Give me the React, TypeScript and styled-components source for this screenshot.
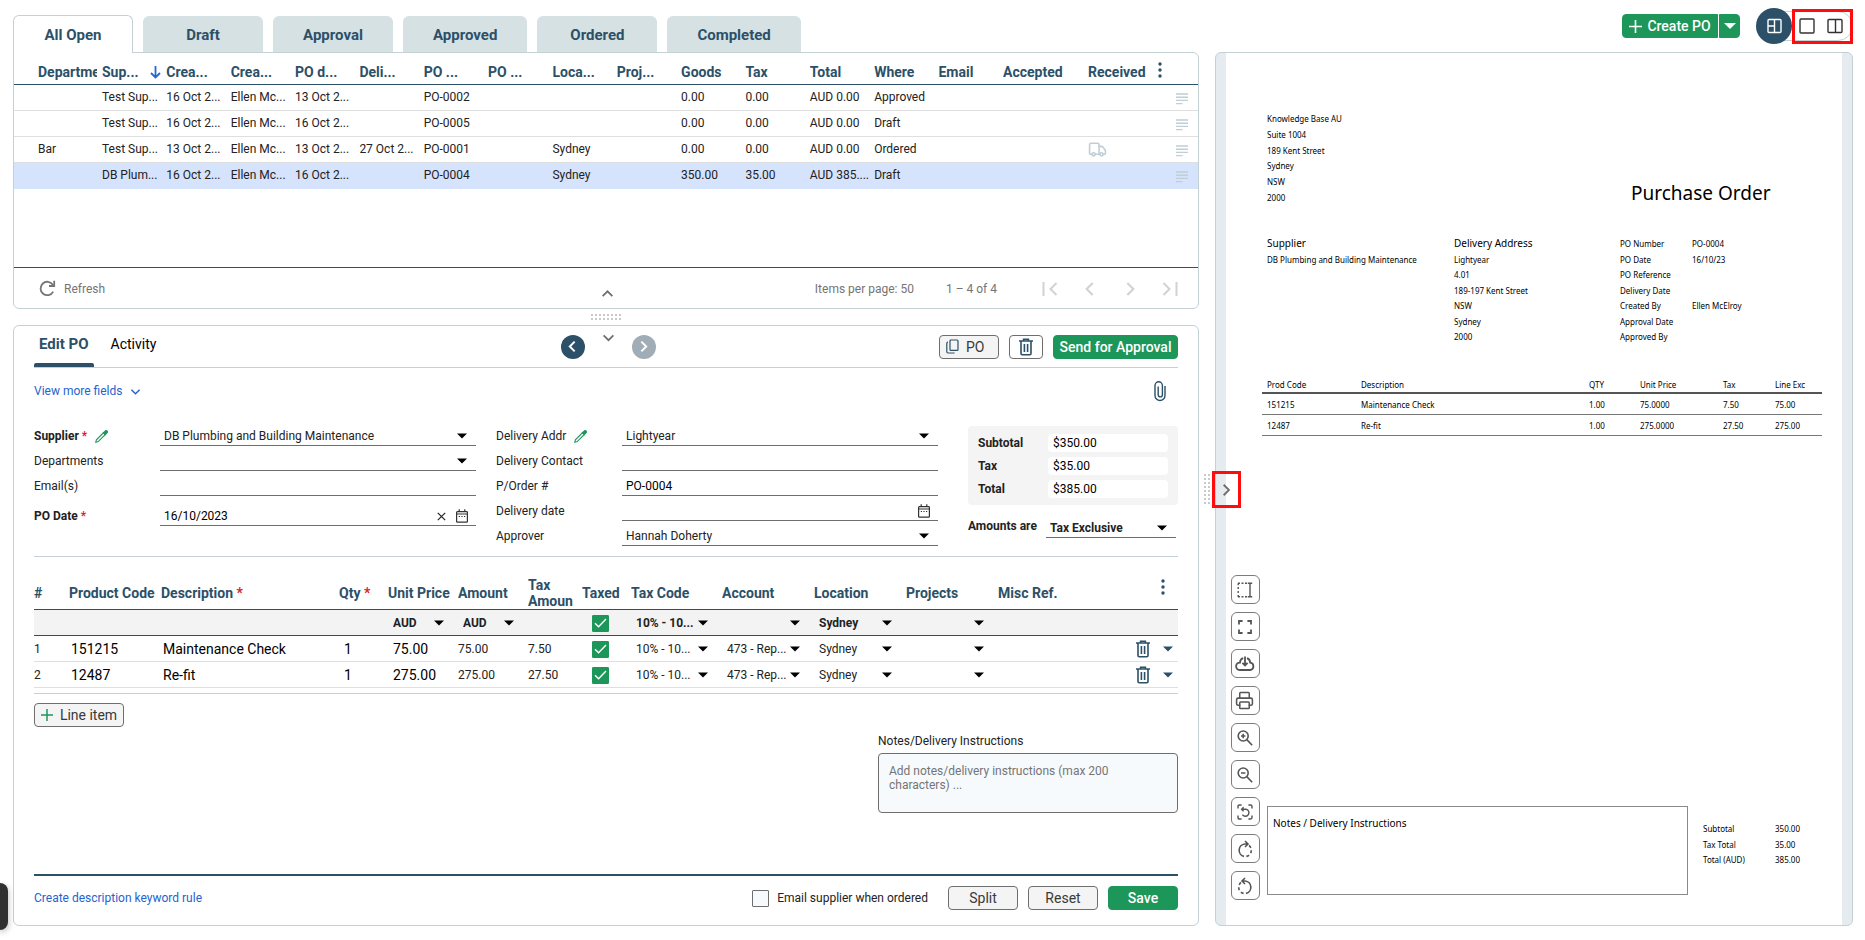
import React, { useState } from 'react';
import styled, { createGlobalStyle, css } from 'styled-components';
import { Printer, Truck } from 'lucide-react';

const navy = '#2c5068';
const green = '#1d965a';
const line = '#c3d1d7';
const grey = '#6e6e6e';
const sans = 'Roboto, "Liberation Sans", sans-serif';

const Global = createGlobalStyle`
  *, *::before, *::after { box-sizing: border-box; }
  body { margin: 0; background: #fff; color: #222; font: 12px/16px ${sans}; }
  button, input, select, textarea { font: inherit; color: inherit; margin: 0; padding: 0; border: 0; border-radius: 0; background: none; }
  button { cursor: pointer; }
  input, select, textarea { min-width: 0; outline-color: ${navy}; }
  svg { display: block; flex: none; }
  a { color: #2563cf; text-decoration: none; }
`;

/* ---------- page frame ---------- */

const Page = styled.div`
  min-height: 100vh;
  padding: 0 12px 14px 13px;
  display: grid;
  grid-template-columns: minmax(0, 1186fr) 16px minmax(0, 638fr);
  grid-template-rows: 52px 1fr;
`;

const TopLeft = styled.nav`
  grid-column: 1 / 3;
  display: flex;
  align-items: flex-end;
  gap: 10px;
`;

const TopRight = styled.div`
  display: flex;
  align-items: center;
  justify-content: flex-end;
  gap: 16px;
`;

const StatusTab = styled.button<{ $active?: boolean }>`
  min-width: 120px;
  height: 36px;
  padding: 2px 30px 0;
  border-radius: 6px 6px 0 0;
  background: #d6e1e3;
  color: ${navy};
  font-size: 15px;
  font-weight: 700;
  ${p => p.$active && css`
    position: relative;
    height: 38px;
    margin-bottom: -1px;
    padding: 0 20px;
    background: #fff;
    border: 1px solid ${line};
    border-bottom: 0;
  `}
`;

const Column = styled.div`
  display: flex;
  flex-direction: column;
  min-width: 0;
`;

const Panel = styled.section`
  display: flex;
  flex-direction: column;
  border: 1px solid ${line};
  border-radius: 6px;
  background: #fff;
`;

const ListPanel = styled(Panel)`border-top-left-radius: 0;`;

const EditPanel = styled(Panel)`
  flex: 1;
  padding: 0 20px;
`;

/* ---------- shared controls ---------- */

const Button = styled.button<{ $kind?: 'primary' | 'plain' | 'soft'; $width?: number }>`
  display: inline-flex;
  align-items: center;
  justify-content: center;
  gap: 7px;
  height: 24px;
  width: ${p => (p.$width ? `${p.$width}px` : 'auto')};
  padding: 0 6px;
  border-radius: 4px;
  border: 1px solid ${grey};
  background: ${p => (p.$kind === 'plain' ? '#fff' : '#f4f4f4')};
  color: #3a3a3a;
  font-size: 14px;
  white-space: nowrap;
  ${p => p.$kind === 'primary' && css`
    border-color: ${green};
    background: ${green};
    color: #fff;
    font-weight: 500;
  `}
`;

const LeadingButton = styled(Button)`
  justify-content: flex-start;
  svg { color: ${navy}; }
`;

const IconButton = styled.button`
  display: inline-flex;
  align-items: center;
  justify-content: center;
  color: ${navy};
`;

const CreateGroup = styled.div`
  display: flex;
  gap: 1px;
  & > :first-child { border-radius: 4px 0 0 4px; gap: 5px; }
  & > :last-child { border-radius: 0 4px 4px 0; }
`;

const ViewSwitch = styled.div`
  display: flex;
  align-items: center;
  height: 30px;
  border: 1px solid ${line};
  border-radius: 15px;
`;

const ViewActive = styled.button`
  display: grid;
  place-items: center;
  width: 36px;
  height: 36px;
  margin-left: -1px;
  border-radius: 50%;
  background: ${navy};
  color: #fff;
`;

const Highlighted = styled.div`
  display: flex;
  align-items: center;
  gap: 12px;
  height: 35px;
  width: 61px;
  margin-right: -1px;
  padding-left: 4px;
  border: 3px solid #fd0d0d;
  color: #555;
`;

const PickWrap = styled.span<{ $bold?: boolean; $inset: number }>`
  display: grid;
  align-items: center;
  flex: 1;
  width: 100%;
  font-weight: ${p => (p.$bold ? 700 : 400)};
  select, svg { grid-area: 1 / 1; }
  select { appearance: none; width: 100%; height: 18px; padding-left: 4px; }
  svg { justify-self: end; margin-right: ${p => p.$inset}px; pointer-events: none; color: #000; }
`;

const Caret = ({ big }: { big?: boolean }) => (
  <svg width={big ? 12 : 10} height={big ? 8 : 6} viewBox="0 0 10 6"><path d="M0 0.5H10L5 5.5Z" fill="currentColor" /></svg>
);

function Pick({ label, value, bold, inset = 9, id }: { label?: string; value: string; bold?: boolean; inset?: number; id?: string }) {
  return (
    <PickWrap $bold={bold} $inset={inset}>
      <select id={id} aria-label={label} defaultValue={value}><option>{value}</option></select>
      <Caret />
    </PickWrap>
  );
}

const CheckWrap = styled.span<{ $on: boolean }>`
  display: inline-grid;
  place-items: center;
  vertical-align: middle;
  input, svg { grid-area: 1 / 1; }
  input {
    appearance: none;
    width: 17px;
    height: 17px;
    border-radius: 1px;
    border: 1px solid ${p => (p.$on ? green : grey)};
    background: ${p => (p.$on ? green : '#f6fafd')};
  }
  svg { pointer-events: none; }
`;

function Check({ on, label, id }: { on?: boolean; label?: string; id?: string }) {
  const [checked, setChecked] = useState(!!on);
  return (
    <CheckWrap $on={checked}>
      <input type="checkbox" id={id} aria-label={label} checked={checked} onChange={() => setChecked(!checked)} />
      {checked && <svg width="13" height="10" viewBox="0 0 13 10"><path d="M1 5.2 4.6 8.8 12 1" fill="none" stroke="#fff" strokeWidth="1.4" /></svg>}
    </CheckWrap>
  );
}

/* ---------- icons ---------- */

const Stroke = ({ w, h, sw = 1.4, children }: { w: number; h: number; sw?: number; children: React.ReactNode }) => (
  <svg width={w} height={h} viewBox={`0 0 ${w} ${h}`} fill="none" stroke="currentColor" strokeWidth={sw}>{children}</svg>
);

const Chevron = ({ dir, size = 12, sw = 1.6 }: { dir: 'up' | 'down' | 'left' | 'right'; size?: number; sw?: number }) => {
  const d = { up: 'M1.5 8.5 6 4l4.5 4.5', down: 'M1.5 4 6 8.5 10.5 4', left: 'M8 1.5 3.5 6 8 10.5', right: 'M4 1.5 8.5 6 4 10.5' }[dir];
  return <svg width={size} height={size} viewBox="0 0 12 12" fill="none" stroke="currentColor" strokeWidth={sw}><path d={d} /></svg>;
};

const Dots = () => (
  <svg width="4" height="16" viewBox="0 0 4 16" fill="currentColor"><circle cx="2" cy="2" r="1.7" /><circle cx="2" cy="8" r="1.7" /><circle cx="2" cy="14" r="1.7" /></svg>
);

const Trash = () => (
  <Stroke w={14} h={18} sw={1.6}><path d="M0 3H14M4.6 3V1.2H9.4V3M2 3.4V15.6Q2 16.8 3.2 16.8H10.8Q12 16.8 12 15.6V3.4" /><path d="M5.4 6V14M8.6 6V14" /></Stroke>
);

const Pencil = () => (
  <svg width="13" height="13" viewBox="0 0 13 13" fill="none" stroke={green} strokeWidth="1.1"><path d="M.8 12.2 1.4 9.8 8.6 2.6 10.4 4.4 3.2 11.6Z" /><path d="M8.4 2.8 10.4.8Q11.2.2 12 1 12.8 1.8 12.2 2.6L10.2 4.6Z" fill={green} /></svg>
);

const Calendar = () => (
  <Stroke w={12} h={14} sw={1.2}><path d="M1.4 2.6H10.6Q11.4 2.6 11.4 3.4V12.4Q11.4 13.2 10.6 13.2H1.4Q.6 13.2 .6 12.4V3.4Q.6 2.6 1.4 2.6Z" /><path d="M.6 5H11.4M3.2 .2V2.6M8.8 .2V2.6" /><path d="M2.8 7.5H9.4" strokeDasharray="1.2 1.4" /></Stroke>
);

const Lines = () => (
  <svg width="12" height="12" viewBox="0 0 12 12" stroke="currentColor" strokeWidth="1.4"><path d="M0 1H12M0 4.2H12M0 7.4H12M0 10.6H6.5" /></svg>
);

const Refresh = () => (
  <Stroke w={17} h={17} sw={1.8}><path d="M14.2 11.6A6.7 6.7 0 1 1 14 5" /><path d="M15.2 .8V6H10" /></Stroke>
);

const Paperclip = () => (
  <Stroke w={12} h={21} sw={1.4}><path d="M11 5V14.5A5 5 0 0 1 1 14.5V4.5A3.6 3.6 0 0 1 8.4 4.5V13.8A2 2 0 0 1 4.2 13.8V5.5" /></Stroke>
);

const Copy = () => (
  <Stroke w={13} h={15} sw={1.2}><rect x="4" y="1" width="8" height="10.4" rx="1" /><path d="M2 3.2Q.8 3.2 .8 4.4V12.8Q.8 14 2 14H8.6" /></Stroke>
);

const Plus = ({ size = 13, color = 'currentColor' }: { size?: number; color?: string }) => (
  <svg width={size} height={size} viewBox="0 0 13 13" fill="none" stroke={color} strokeWidth="1.6"><path d="M6.5 0V13M0 6.5H13" /></svg>
);

const toolIcons: [string, React.ReactNode][] = [
  ['Select area', <Stroke w={16} h={16}><path d="M1.2 1.2V15" strokeDasharray="2 1.9" /><path d="M1 1.2H11M1 14.8H11" strokeDasharray="2 1.5" /><path d="M13 1V15M10.8 1.2H15.2M10.8 14.8H15.2" /></Stroke>],
  ['Full screen', <Stroke w={14} h={14} sw={1.8}><path d="M1 4.6V1H4.6M9.4 1H13V4.6M13 9.4V13H9.4M4.6 13H1V9.4" /></Stroke>],
  ['Download', <Stroke w={20} h={15} sw={1.8}><path d="M8.2 2.2A4.6 4.6 0 0 0 5 6.6 3.7 3.7 0 0 0 4.6 14H15.4A3.7 3.7 0 0 0 15.2 6.7 5 5 0 0 0 12 2.2" /><path d="M10 .5V9M7.4 6.8 10 9.4 12.6 6.8" /></Stroke>],
  ['Print', <Printer size={19} strokeWidth={1.9} />],
  ['Zoom in', <Stroke w={16} h={16} sw={1.6}><circle cx="6.2" cy="6" r="5" /><path d="M9.8 9.6 15.2 15.2M6.2 3.8V8.2M4 6H8.4" /></Stroke>],
  ['Zoom out', <Stroke w={16} h={16} sw={1.6}><circle cx="6.2" cy="6" r="5" /><path d="M9.8 9.6 15.2 15.2M4 6H8.4" /></Stroke>],
  ['Reset view', <Stroke w={16} h={16}><path d="M1 4.6V2.4Q1 1 2.4 1H4.6M11.4 1H13.6Q15 1 15 2.4V4.6M15 11.4V13.6Q15 15 13.6 15H11.4M4.6 15H2.4Q1 15 1 13.6V11.4" /><path d="M4.8 5.2H8.4A3.5 3.5 0 0 1 8.4 12.2 3.6 3.6 0 0 1 5.4 10.6M6.6 3.2 4.6 5.2 6.6 7.2" /></Stroke>],
  ['Rotate right', <Stroke w={16} h={18} sw={1.6}><path d="M7 16.4A6.3 6.3 0 0 1 7.8 4H10.6M8 1 11 4 8 7" /><path d="M9.4 16.4A6.3 6.3 0 0 0 12 5.4" strokeDasharray="3 2.4" /></Stroke>],
  ['Rotate left', <Stroke w={16} h={18} sw={1.6}><path d="M9 16.4A6.3 6.3 0 0 0 8.2 4H5.4M8 1 5 4 8 7" /><path d="M6.6 16.4A6.3 6.3 0 0 1 4 5.4" strokeDasharray="3 2.4" /></Stroke>],
];

/* ---------- order list ---------- */

const ListArea = styled.div`height: 214px;`;

const OrderTable = styled.table`
  width: 100%;
  table-layout: fixed;
  border-collapse: separate;
  border-spacing: 0;
  th, td { padding: 0 5px 0 0; text-align: left; white-space: nowrap; }
  th { height: 32px; padding-top: 6px; border-bottom: 1px solid ${navy}; color: ${navy}; font-size: 14px; font-weight: 700; }
  td { height: 26px; padding-bottom: 1px; border-bottom: 1px solid #dfdfdf; }
  th:first-child, td:first-child { padding-left: 24px; }
  tr.selected td { background: #d6e3fd; border-color: #d6e3fd; }
  td svg { color: #c0ced5; }
  th:last-child, td:last-child { padding-right: 0; }
`;

const Clip = styled.span`
  display: block;
  overflow: hidden;
`;

const SortHead = styled.span`
  display: flex;
  align-items: center;
  justify-content: space-between;
`;

const RowIcon = styled(IconButton)`
  display: flex;
  padding: 4px 0 0 18px;
`;

const ListFooter = styled.footer`
  display: grid;
  grid-template-columns: 1fr auto 1fr;
  align-items: center;
  height: 41px;
  padding: 1px 19px 0 25px;
  border-top: 1px solid #2b5560;
  color: #757575;
`;

const RefreshButton = styled.button`
  justify-self: start;
  display: flex;
  align-items: center;
  gap: 8px;
`;

const UpButton = styled(IconButton)`
  color: ${grey};
  padding: 10px 4px 0 0;
`;

const Pager = styled.div`
  justify-self: end;
  display: flex;
  align-items: center;
  gap: 32px;
`;

const PagerArrows = styled.div`
  display: flex;
  gap: 22px;
  margin-left: 12px;
  button { color: #d2d2d2; width: 18px; }
`;

const PageEnd = ({ flip }: { flip?: boolean }) => (
  <Stroke w={16} h={16} sw={2}>{flip ? <path d="M1.5 2 7.5 8 1.5 14M14.5 1V15" /> : <path d="M14.5 2 8.5 8 14.5 14M1.5 1V15" />}</Stroke>
);

const heads = ['Departme', 'Sup...', 'Crea...', 'Crea...', 'PO d...', 'Deli...', 'PO ...', 'PO ...', 'Loca...', 'Proj...', 'Goods', 'Tax', 'Total', 'Where', 'Email', 'Accepted', 'Received'];
const orders = [
  ['', 'Test Sup...', '16 Oct 2...', 'Ellen Mc...', '13 Oct 2...', '', 'PO-0002', '', '', '', '0.00', '0.00', 'AUD 0.00', 'Approved', '', '', ''],
  ['', 'Test Sup...', '16 Oct 2...', 'Ellen Mc...', '16 Oct 2...', '', 'PO-0005', '', '', '', '0.00', '0.00', 'AUD 0.00', 'Draft', '', '', ''],
  ['Bar', 'Test Sup...', '13 Oct 2...', 'Ellen Mc...', '13 Oct 2...', '27 Oct 2...', 'PO-0001', '', 'Sydney', '', '0.00', '0.00', 'AUD 0.00', 'Ordered', '', '', 'truck'],
  ['', 'DB Plum...', '16 Oct 2...', 'Ellen Mc...', '16 Oct 2...', '', 'PO-0004', '', 'Sydney', '', '350.00', '35.00', 'AUD 385....', 'Draft', '', '', ''],
];

function OrderList() {
  return (
    <ListPanel>
      <ListArea>
        <OrderTable>
          <colgroup>
            <col width="88" />
            {heads.slice(1, 15).map((_, i) => <col key={i} />)}
            <col width="85" /><col width="70" /><col width="40" />
          </colgroup>
          <thead>
            <tr>
              {heads.map((h, i) => (
                <th key={i}>
                  {i === 1 ? (
                    <SortHead>{h}<svg width="11" height="14" viewBox="0 0 11 14" fill="none" stroke="#2268d8" strokeWidth="1.8"><path d="M5.5 1V12.4M1 8 5.5 12.5 10 8" /></svg></SortHead>
                  ) : <Clip>{h}</Clip>}
                </th>
              ))}
              <th><IconButton aria-label="Columns"><Dots /></IconButton></th>
            </tr>
          </thead>
          <tbody>
            {orders.map((r, n) => (
              <tr key={n} className={n === 3 ? 'selected' : undefined}>
                {r.map((c, i) => <td key={i}>{c === 'truck' ? <Truck size={19} strokeWidth={2} /> : c}</td>)}
                <td><RowIcon aria-label="Row details"><Lines /></RowIcon></td>
              </tr>
            ))}
          </tbody>
        </OrderTable>
      </ListArea>
      <ListFooter>
        <RefreshButton><Refresh />Refresh</RefreshButton>
        <UpButton aria-label="Collapse list"><Chevron dir="up" size={13} /></UpButton>
        <Pager>
          <span>Items per page: 50</span>
          <span>1 – 4 of 4</span>
          <PagerArrows>
            <IconButton aria-label="First page"><PageEnd /></IconButton>
            <IconButton aria-label="Previous page"><Chevron dir="left" size={16} /></IconButton>
            <IconButton aria-label="Next page"><Chevron dir="right" size={16} /></IconButton>
            <IconButton aria-label="Last page"><PageEnd flip /></IconButton>
          </PagerArrows>
        </Pager>
      </ListFooter>
    </ListPanel>
  );
}

/* ---------- splitters ---------- */

const Splitter = styled.div<{ $vertical?: boolean }>`
  display: grid;
  place-items: center;
  height: ${p => (p.$vertical ? 'auto' : '16px')};
`;

const Grip = styled.i<{ $vertical?: boolean }>`
  width: ${p => (p.$vertical ? '6px' : '30px')};
  height: ${p => (p.$vertical ? '30px' : '6px')};
  background: repeating-linear-gradient(90deg, #c9c9c9 0 2px, transparent 2px 4px);
  mask: repeating-linear-gradient(#000 0 2px, transparent 2px 4px);
`;

/* ---------- edit form ---------- */

const EditHead = styled.header`
  display: grid;
  grid-template-columns: 1fr auto 1fr;
  align-items: center;
  height: 42px;
  border-bottom: 1px solid ${line};
`;

const EditTabs = styled.nav`
  display: flex;
  align-self: stretch;
  gap: 12px;
`;

const EditTab = styled.button<{ $active?: boolean }>`
  position: relative;
  height: 41px;
  padding: 0 5px 6px;
  font-size: ${p => (p.$active ? 15 : 14)}px;
  font-weight: ${p => (p.$active ? 700 : 400)};
  color: ${p => (p.$active ? navy : '#000')};
  &::after {
    content: '';
    display: ${p => (p.$active ? 'block' : 'none')};
    position: absolute;
    inset: auto 0 0;
    height: 4px;
    border-radius: 2px 2px 0 0;
    background: ${navy};
  }
`;

const Stepper = styled.div`
  display: flex;
  align-items: center;
  gap: 17px;
  height: 32px;
  padding-left: 4px;
  & > :nth-child(2) { align-self: flex-start; color: ${grey}; }
`;

const Round = styled.button<{ $dim?: boolean }>`
  display: grid;
  place-items: center;
  width: 24px;
  height: 24px;
  border-radius: 50%;
  background: ${p => (p.$dim ? '#a0adb7' : navy)};
  color: #fff;
`;

const HeadActions = styled.div`
  justify-self: end;
  display: flex;
  gap: 10px;
`;

const MoreRow = styled.div`
  display: flex;
  justify-content: space-between;
  align-items: center;
  height: 46px;
  padding-right: 12px;
  a { display: flex; align-items: center; gap: 8px; }
`;

const FormGrid = styled.div`
  display: grid;
  grid-template-columns: minmax(0, 1fr) minmax(0, 1fr) 220px;
  column-gap: 20px;
  align-items: start;
  margin-top: 7px;
  padding-bottom: 10px;
  border-bottom: 1px solid ${line};
`;

const Field = styled.div<{ $tall?: boolean; $bold?: boolean }>`
  display: grid;
  grid-template-columns: 126px minmax(0, 1fr);
  align-items: end;
  height: ${p => (p.$tall ? 30 : 25)}px;
  line-height: 18px;
  label { display: flex; align-items: center; gap: 8px; padding-bottom: 1px; font-weight: ${p => (p.$bold ? 700 : 400)}; }
`;

const FieldLine = styled.div`
  display: flex;
  align-items: center;
  gap: 10px;
  height: 19px;
  padding-right: 8px;
  border-bottom: 1px solid ${grey};
  input { flex: 1; height: 18px; padding-left: 4px; color: #000; }
`;

const PickLine = styled(FieldLine)`padding-right: 0;`;

const Req = styled.span`color: #e01b2b;`;

const Side = styled.div`
  margin: 5px 0 0 10px;
  font-weight: 700;
`;

const Totals = styled.div`
  display: grid;
  grid-template-columns: 1fr 120px;
  row-gap: 5px;
  height: 79px;
  padding: 8px 10px 7px;
  border-radius: 4px;
  background: #f4f4f4;
  line-height: 18px;
  input { height: 18px; padding-left: 5px; border-radius: 4px; background: #fff; color: #000; font-weight: 400; }
`;

const Amounts = styled.div`
  display: grid;
  grid-template-columns: 78px 1fr;
  margin: 14px 2px 0 0;
  line-height: 14px;
`;

/* ---------- line items ---------- */

const ItemsWrap = styled.div`
  padding-bottom: 5px;
  border-bottom: 1px solid ${line};
`;

const ItemTable = styled.table`
  width: 100%;
  table-layout: fixed;
  border-collapse: separate;
  border-spacing: 0;
  th, td { padding: 0; text-align: left; overflow: hidden; }
  th { height: 53px; padding-top: 20px; border-bottom: 1px solid ${navy}; color: ${navy}; font-size: 14px; font-weight: 700; }
  th:nth-child(7) { padding-right: 6px; }
  td { height: 26px; border-bottom: 1px solid #dfdfdf; white-space: nowrap; }
  tr.defaults td { background: #f3f3f3; border-color: ${navy}; }
  td:nth-child(8) { padding-left: 10px; line-height: 18px; }
`;

const CellInput = styled.input<{ $pad?: number }>`
  display: block;
  width: 100%;
  height: 22px;
  padding-left: ${p => p.$pad ?? 2}px;
  font-size: 14px;
  color: #000;
`;

const CellPick = styled.div`
  display: flex;
  padding-left: 1px;
`;

const RowTools = styled.div`
  display: flex;
  align-items: center;
  justify-content: flex-end;
  gap: 13px;
  padding-right: 5px;
  color: ${navy};
`;

const DotsCell = styled.div`
  display: flex;
  justify-content: flex-end;
  padding: 0 13px 12px 0;
`;

const Notes = styled.div`
  display: flex;
  flex-direction: column;
  gap: 4px;
  width: 300px;
  margin: 6px 0 20px auto;
  textarea {
    height: 60px;
    padding: 10px;
    border: 1px solid ${grey};
    border-radius: 4px;
    background: #f6fafd;
    line-height: 14px;
    resize: none;
  }
  textarea::placeholder { color: #757575; }
`;

const EditFoot = styled.footer`
  display: flex;
  align-items: center;
  gap: 10px;
  margin-top: auto;
  padding: 10px 0 15px;
  border-top: 2px solid ${navy};
`;

const EmailOption = styled.label`
  display: flex;
  align-items: center;
  gap: 8px;
  margin: 0 10px 0 auto;
`;

const items = [
  { n: 1, code: '151215', desc: 'Maintenance Check', price: '75.00', amount: '75.00', tax: '7.50' },
  { n: 2, code: '12487', desc: 'Re-fit', price: '275.00', amount: '275.00', tax: '27.50' },
];

const RowHeadWrap = styled.div`
  display: flex;
  align-items: center;
  justify-content: space-between;
  height: 16px;
`;

const RowHead = () => (
  <RowHeadWrap>Misc Ref.<DotsCell><IconButton aria-label="Item columns"><Dots /></IconButton></DotsCell></RowHeadWrap>
);

function Items() {
  return (
    <ItemsWrap>
      <ItemTable>
        <colgroup>
          {[35, 92, 0, 49, 70, 70, 54, 49, 91, 92, 92, 92, 180].map((w, i) => <col key={i} width={w || undefined} />)}
        </colgroup>
        <thead>
          <tr>
            <th>#</th><th>Product Code</th><th>Description <Req>*</Req></th><th>Qty <Req>*</Req></th><th>Unit Price</th><th>Amount</th>
            <th>Tax Amoun</th><th>Taxed</th><th>Tax Code</th><th>Account</th><th>Location</th><th>Projects</th>
            <th><RowHead /></th>
          </tr>
        </thead>
        <tbody>
          <tr className="defaults">
            <td /><td /><td /><td />
            <td><CellPick><Pick label="Price currency" value="AUD" bold inset={14} /></CellPick></td>
            <td><CellPick><Pick label="Amount currency" value="AUD" bold inset={14} /></CellPick></td>
            <td />
            <td><Check on label="All taxed" /></td>
            <td><CellPick><Pick label="Default tax code" value="10% - 10..." bold inset={14} /></CellPick></td>
            <td><CellPick><Pick label="Default account" value="" inset={14} /></CellPick></td>
            <td><CellPick><Pick label="Default location" value="Sydney" bold inset={14} /></CellPick></td>
            <td><CellPick><Pick label="Default project" value="" inset={14} /></CellPick></td>
            <td />
          </tr>
          {items.map(it => (
            <tr key={it.n}>
              <td>{it.n}</td>
              <td><CellInput aria-label="Product code" defaultValue={it.code} /></td>
              <td><CellInput aria-label="Description" defaultValue={it.desc} /></td>
              <td><CellInput aria-label="Quantity" defaultValue="1" $pad={5} /></td>
              <td><CellInput aria-label="Unit price" defaultValue={it.price} $pad={5} /></td>
              <td>{it.amount}</td>
              <td>{it.tax}</td>
              <td><Check on label="Taxed" /></td>
              <td><CellPick><Pick label="Tax code" value="10% - 10..." inset={14} /></CellPick></td>
              <td><CellPick><Pick label="Account" value="473 - Rep..." inset={14} /></CellPick></td>
              <td><CellPick><Pick label="Location" value="Sydney" inset={14} /></CellPick></td>
              <td><CellPick><Pick label="Project" value="" inset={14} /></CellPick></td>
              <td>
                <RowTools>
                  <IconButton aria-label="Delete line"><Trash /></IconButton>
                  <IconButton aria-label="Line menu"><Caret /></IconButton>
                </RowTools>
              </td>
            </tr>
          ))}
        </tbody>
      </ItemTable>
    </ItemsWrap>
  );
}

const AddRow = styled.div`
  display: flex;
  padding-top: 9px;
`;

const NavyInk = styled.span`color: ${navy};`;
const DarkInk = styled.span`color: #333;`;

function EditOrder() {
  return (
    <EditPanel>
      <EditHead>
        <EditTabs>
          <EditTab $active>Edit PO</EditTab>
          <EditTab>Activity</EditTab>
        </EditTabs>
        <Stepper>
          <Round aria-label="Previous order"><Chevron dir="left" size={13} sw={1.8} /></Round>
          <IconButton aria-label="Collapse form"><Chevron dir="down" size={13} /></IconButton>
          <Round $dim aria-label="Next order"><Chevron dir="right" size={13} sw={1.8} /></Round>
        </Stepper>
        <HeadActions>
          <LeadingButton $width={60}><Copy />PO</LeadingButton>
          <Button $kind="plain" $width={34} aria-label="Delete order"><NavyInk><Trash /></NavyInk></Button>
          <Button $kind="primary" $width={125}>Send for Approval</Button>
        </HeadActions>
      </EditHead>
      <MoreRow>
        <a href="#more">View more fields<Chevron dir="down" size={11} /></a>
        <IconButton aria-label="Attachments"><Paperclip /></IconButton>
      </MoreRow>
      <FormGrid>
        <div>
          <Field $bold><label htmlFor="supplier"><span>Supplier <Req>*</Req></span><Pencil /></label><PickLine><Pick id="supplier" value="DB Plumbing and Building Maintenance" /></PickLine></Field>
          <Field><label htmlFor="departments">Departments</label><PickLine><Pick id="departments" value="" /></PickLine></Field>
          <Field><label htmlFor="emails">Email(s)</label><FieldLine><input id="emails" /></FieldLine></Field>
          <Field $tall $bold>
            <label htmlFor="podate"><span>PO Date <Req>*</Req></span></label>
            <FieldLine>
              <input id="podate" defaultValue="16/10/2023" />
              <IconButton aria-label="Clear date"><Stroke w={9} h={9} sw={1.2}><path d="M.8.8 8.2 8.2M8.2.8.8 8.2" stroke="#222" /></Stroke></IconButton>
              <IconButton aria-label="Pick date"><DarkInk><Calendar /></DarkInk></IconButton>
            </FieldLine>
          </Field>
        </div>
        <div>
          <Field><label htmlFor="addr">Delivery Addr<Pencil /></label><PickLine><Pick id="addr" value="Lightyear" /></PickLine></Field>
          <Field><label htmlFor="contact">Delivery Contact</label><FieldLine><input id="contact" /></FieldLine></Field>
          <Field><label htmlFor="pono">P/Order #</label><FieldLine><input id="pono" defaultValue="PO-0004" /></FieldLine></Field>
          <Field><label htmlFor="ddate">Delivery date</label><FieldLine><input id="ddate" /><IconButton aria-label="Pick delivery date"><DarkInk><Calendar /></DarkInk></IconButton></FieldLine></Field>
          <Field><label htmlFor="approver">Approver</label><PickLine><Pick id="approver" value="Hannah Doherty" /></PickLine></Field>
        </div>
        <Side>
          <Totals>
            <label htmlFor="sub">Subtotal</label><input id="sub" readOnly value="$350.00" />
            <label htmlFor="tax">Tax</label><input id="tax" readOnly value="$35.00" />
            <label htmlFor="total">Total</label><input id="total" readOnly value="$385.00" />
          </Totals>
          <Amounts>
            <label htmlFor="amounts">Amounts are</label>
            <PickLine><Pick id="amounts" value="Tax Exclusive" bold /></PickLine>
          </Amounts>
        </Side>
      </FormGrid>
      <Items />
      <AddRow><Button $width={90}><Plus size={12} color={green} />Line item</Button></AddRow>
      <Notes>
        <label htmlFor="notes">Notes/Delivery Instructions</label>
        <textarea id="notes" placeholder="Add notes/delivery instructions (max 200 characters) ..." />
      </Notes>
      <EditFoot>
        <a href="#rule">Create description keyword rule</a>
        <EmailOption><Check id="emailsup" />Email supplier when ordered</EmailOption>
        <Button $width={70}>Split</Button>
        <Button $width={70}>Reset</Button>
        <Button $kind="primary" $width={70}>Save</Button>
      </EditFoot>
    </EditPanel>
  );
}

/* ---------- document preview ---------- */

const Preview = styled(Panel)`
  position: relative;
  padding: 0 10px;
  background: #e5ebee;
`;

const Sheet = styled.article`
  display: flex;
  flex-direction: column;
  flex: 1;
  padding: 58px 20px 30px 36px;
  background: #fff;
  color: #000;
  font: 8px/15px "Noto Sans", "DejaVu Sans", sans-serif;
`;

const DocGrid = styled.div<{ $cols: string }>`
  display: grid;
  grid-template-columns: ${p => p.$cols};
  padding-left: 5px;
`;

const Stack = styled.div<{ $rows: number; $height: number }>`
  display: grid;
  grid-template-rows: repeat(${p => p.$rows}, 1fr);
  height: ${p => p.$height}px;
  white-space: nowrap;
`;

const DocTitle = styled.h1`
  align-self: end;
  margin: 0;
  font-size: 19px;
  font-weight: 400;
  line-height: 26px;
`;

const DocLabel = styled.span`font-size: 10px;`;

const DocParties = styled(DocGrid)`margin: 30px 0 32px;`;

const DocTable = styled.table`
  width: 100%;
  table-layout: fixed;
  border-collapse: separate;
  border-spacing: 0;
  th, td { text-align: left; font-weight: 400; padding: 0 0 0 5px; white-space: nowrap; }
  th { height: 16px; border-bottom: 2px solid #555; }
  td { height: 21px; padding-top: 1px; border-bottom: 1px solid #777; }
`;

const DocFoot = styled(DocGrid)`margin-top: auto;`;

const DocNotes = styled.div`
  height: 89px;
  margin-right: 15px;
  padding: 9px 5px;
  border: 1px solid #8a8a8a;
`;

const DocSums = styled(Stack)`margin-top: 15px;`;

const Tools = styled.div`
  position: absolute;
  left: 15px;
  bottom: 25px;
  display: grid;
  gap: 8px;
`;

const Tool = styled.button`
  display: grid;
  place-items: center;
  width: 29px;
  height: 29px;
  padding-right: 2px;
  border: 1px solid #7c7c7c;
  border-radius: 6px;
  background: #fff;
  color: #555;
`;

const CollapseButton = styled.button`
  position: absolute;
  left: -4px;
  top: 50%;
  display: grid;
  place-items: center;
  width: 29px;
  height: 37px;
  margin-top: -18px;
  padding-right: 2px;
  border: 3px solid #fd0d0d;
  color: ${grey};
`;

const rows = (list: string[]) => list.map((t, i) => <span key={i}>{t}</span>);

function DocumentPreview() {
  return (
    <Preview>
      <Sheet>
        <DocGrid $cols="364fr 191fr">
          <Stack $rows={6} $height={95}>{rows(['Knowledge Base AU', 'Suite 1004', '189 Kent Street', 'Sydney', 'NSW', '2000'])}</Stack>
          <DocTitle>Purchase Order</DocTitle>
        </DocGrid>
        <DocParties $cols="187fr 166fr 72fr 130fr">
          <Stack $rows={7} $height={109}><DocLabel>Supplier</DocLabel>{rows(['DB Plumbing and Building Maintenance'])}</Stack>
          <Stack $rows={7} $height={109}><DocLabel>Delivery Address</DocLabel>{rows(['Lightyear', '4.01', '189-197 Kent Street', 'NSW', 'Sydney', '2000'])}</Stack>
          <Stack $rows={7} $height={109}>{rows(['PO Number', 'PO Date', 'PO Reference', 'Delivery Date', 'Created By', 'Approval Date', 'Approved By'])}</Stack>
          <Stack $rows={7} $height={109}>{rows(['PO-0004', '16/10/23', '', '', 'Ellen McElroy'])}</Stack>
        </DocParties>
        <DocTable>
          <colgroup><col width="94" /><col /><col width="51" /><col width="83" /><col width="52" /><col width="52" /></colgroup>
          <thead><tr><th>Prod Code</th><th>Description</th><th>QTY</th><th>Unit Price</th><th>Tax</th><th>Line Exc</th></tr></thead>
          <tbody>
            <tr><td>151215</td><td>Maintenance Check</td><td>1.00</td><td>75.0000</td><td>7.50</td><td>75.00</td></tr>
            <tr><td>12487</td><td>Re-fit</td><td>1.00</td><td>275.0000</td><td>27.50</td><td>275.00</td></tr>
          </tbody>
        </DocTable>
        <DocFoot $cols="436fr 72fr 47fr">
          <DocNotes><DocLabel>Notes / Delivery Instructions</DocLabel></DocNotes>
          <DocSums $rows={3} $height={47}>{rows(['Subtotal', 'Tax Total', 'Total (AUD)'])}</DocSums>
          <DocSums $rows={3} $height={47}>{rows(['350.00', '35.00', '385.00'])}</DocSums>
        </DocFoot>
      </Sheet>
      <Tools>{toolIcons.map(([name, icon]) => <Tool key={name} aria-label={name}>{icon}</Tool>)}</Tools>
      <CollapseButton aria-label="Collapse preview"><Chevron dir="right" size={14} /></CollapseButton>
    </Preview>
  );
}

const ChatTab = styled.button`
  position: fixed;
  left: 0;
  bottom: 10px;
  width: 8px;
  height: 47px;
  border-radius: 0 8px 8px 0;
  background: #303030;
  box-shadow: 0 2px 6px rgba(0, 0, 0, 0.3);
`;

export default function App() {
  return (
    <>
      <Global />
      <Page>
        <TopLeft>
          {['All Open', 'Draft', 'Approval', 'Approved', 'Ordered', 'Completed'].map((t, i) => (
            <StatusTab key={t} $active={i === 0}>{t}</StatusTab>
          ))}
        </TopLeft>
        <TopRight>
          <CreateGroup>
            <Button $kind="primary" $width={96}><Plus />Create PO</Button>
            <Button $kind="primary" $width={21} aria-label="More create options"><Caret big /></Button>
          </CreateGroup>
          <ViewSwitch>
            <ViewActive aria-label="Grid view"><Stroke w={15} h={16}><rect x="1" y="1.5" width="13" height="13" rx="1" /><path d="M7.5 1.5V14.5M1 8H7.5" /></Stroke></ViewActive>
            <Highlighted>
              <IconButton aria-label="Single view"><DarkInk><Stroke w={16} h={16}><rect x="1" y="1" width="14" height="14" rx="1" /></Stroke></DarkInk></IconButton>
              <IconButton aria-label="Split view"><DarkInk><Stroke w={16} h={16}><rect x="1" y="1.5" width="14" height="13" rx="1" /><path d="M8.5 1.5V14.5" /></Stroke></DarkInk></IconButton>
            </Highlighted>
          </ViewSwitch>
        </TopRight>
        <Column>
          <OrderList />
          <Splitter><Grip /></Splitter>
          <EditOrder />
        </Column>
        <Splitter $vertical><Grip $vertical /></Splitter>
        <DocumentPreview />
      </Page>
      <ChatTab aria-label="Open chat" />
    </>
  );
}
